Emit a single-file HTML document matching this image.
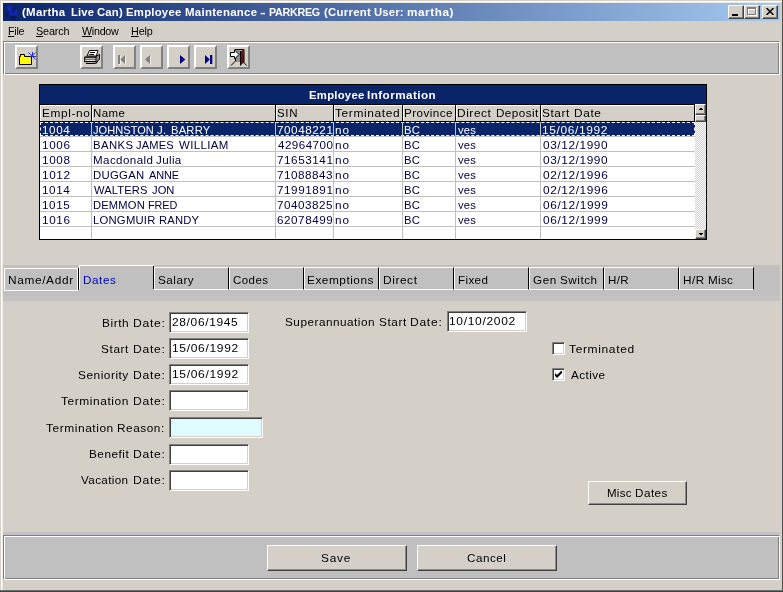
<!DOCTYPE html>
<html><head><meta charset="utf-8"><title>Employee Maintenance</title>
<style>
html,body{margin:0;padding:0}
body{width:783px;height:592px;position:relative;overflow:hidden;background:#d4d0c8;font-family:"Liberation Sans",sans-serif;font-size:11px;}
.a{position:absolute;box-sizing:border-box}
#texts{position:absolute;left:0;top:0;width:783px;height:592px;will-change:transform}
.t{position:absolute;white-space:pre;transform-origin:0 0;display:block}
.t u{text-decoration:underline;text-underline-offset:1px;text-decoration-thickness:1px}
#title{left:3px;top:3px;width:777px;height:18px;background:linear-gradient(90deg,#0a246a 0%,#a6caf0 100%)}
.cb{top:5px;width:16px;height:14px;background:#d4d0c8;border:1px solid;border-color:#fff #404040 #404040 #fff;box-shadow:inset -1px -1px 0 #808080}
.etch{border:1px solid;border-color:#808080 #fff #fff #808080;box-shadow:inset 1px 1px 0 #fff,inset -1px -1px 0 #808080;background:#c0c0c0}
.tbtn{top:45px;width:23px;height:24px;background:#d4d0c8;border:2px solid;border-color:#fff #808080 #808080 #fff}
.btn{background:#d4d0c8;border:1px solid;border-color:#fff #404040 #404040 #fff;box-shadow:inset -1px -1px 0 #8c8a86}
.inp{width:80px;height:21px;background:#fff;border:1px solid;border-color:#808080 #fff #fff #808080;box-shadow:inset 1px 1px 0 #404040,inset -1px -1px 0 #d4d0c8}
.hc{top:105px;height:16px;background:#d4d0c8;border-top:1px solid #fff;border-left:1px solid #fff}
.sb{background:#d4d0c8;border:1px solid;border-color:#fff #404040 #404040 #fff;box-shadow:inset -1px -1px 0 #808080}
.vl{top:122px;width:1px;height:117px;background:#c0c0c0}
.hl{left:40px;width:655px;height:1px;background:#c0c0c0}
.tab{top:267px;width:75px;height:23px;border:1px solid;border-color:#fff #000 #fff #fff}
.chk{width:13px;height:13px;background:#fff;border:1px solid;border-color:#808080 #fff #fff #808080;box-shadow:inset 1px 1px 0 #404040,inset -1px -1px 0 #d4d0c8}
</style></head><body>
<!-- window frame -->
<div class="a" style="left:1px;top:1px;width:781px;height:1px;background:#fff"></div>
<div class="a" style="left:1px;top:1px;width:1px;height:590px;background:#fff"></div>
<div class="a" style="left:2px;top:2px;width:779px;height:1px;background:#eceae6"></div>
<div class="a" style="left:2px;top:2px;width:1px;height:588px;background:#eceae6"></div>
<div class="a" style="left:782px;top:0;width:1px;height:592px;background:#505050"></div>
<div class="a" style="left:0;top:590px;width:783px;height:1px;background:#707070"></div>
<div class="a" style="left:0;top:591px;width:783px;height:1px;background:#404040"></div>
<!-- title bar -->
<div class="a" id="title"></div>
<svg class="a" style="left:4px;top:3px" width="17" height="18" viewBox="0 0 17 18"><defs><filter id="bl" x="-20%" y="-20%" width="140%" height="140%"><feGaussianBlur stdDeviation=".8"/></filter></defs><g filter="url(#bl)"><rect x="3" y="3" width="5" height="4" fill="#1c2cd8" opacity=".75"/><rect x="5" y="7" width="8" height="5" fill="#1c2cd8" opacity=".8"/><rect x="8" y="6" width="2" height="4" fill="#02062a"/><rect x="4" y="8" width="2" height="2" fill="#02062a" opacity=".7"/><rect x="7" y="13" width="5" height="3" fill="#02062a" opacity=".65"/><rect x="2" y="11" width="3" height="3" fill="#02062a" opacity=".4"/></g></svg>
<div class="a cb" style="left:728px"><div class="a" style="left:3px;top:8px;width:6px;height:2px;background:#000"></div></div>
<div class="a cb" style="left:744px"><div class="a" style="left:3px;top:2px;width:9px;height:8px;border:1px solid #fff;border-top-width:2px"></div><div class="a" style="left:2px;top:1px;width:9px;height:8px;border:1px solid #808080;border-top-width:2px"></div></div>
<div class="a cb" style="left:762px"><svg class="a" style="left:3px;top:2px" width="8" height="7" viewBox="0 0 8 7"><path d="M0.500 0l7 7M7.500 0l-7 7" stroke="#000" stroke-width="1.450" fill="none"/></svg></div>
<!-- toolbar -->
<div class="a etch" style="left:3px;top:41px;width:777px;height:34px"></div>
<div class="a tbtn" style="left:15px"></div>
<div class="a tbtn" style="left:80px"></div>
<div class="a tbtn" style="left:113px"></div>
<div class="a tbtn" style="left:140px"></div>
<div class="a tbtn" style="left:167px"></div>
<div class="a tbtn" style="left:194px"></div>
<div class="a tbtn" style="left:227px"></div>
<svg class="a" style="left:0;top:40px" width="260" height="36" viewBox="0 40 260 36">
<path d="M19.500 56.500h1v-2h4v2h7v8h-12z" fill="#ffff00" stroke="#000"/>
<path d="M28.500 52.500l7 7M35.500 52.500l-4.500 5M32.500 52v5M30.500 56.500h5.500" stroke="#2a2acc" fill="none"/>
<path d="M84.500 56.500h11.500v7h-10v-1.500h-1.500z" fill="#eceae4"/>
<path d="M96 56.500l3.500-2.200v4.700l-3.500 4.500z" fill="#8a8a8a" stroke="#000" stroke-width=".9"/>
<path d="M89.500 50.500h8.500l-1.700 5.500h-9.300z" fill="#fff" stroke="#000"/>
<path d="M90 52.500h5M89.300 54.500h4.700" stroke="#000"/>
<path d="M84.500 57.100h11.500" stroke="#000" stroke-width="1.400"/>
<path d="M84.500 59.200h11.500" stroke="#000" stroke-width=".7"/>
<path d="M84.300 61.600h12" stroke="#000" stroke-width="1.300"/>
<path d="M86 63.500h9.500" stroke="#000"/>
<path d="M84.700 57v5" stroke="#000"/>
<path d="M119 56h2v9h-2zM126 56v9l-4.700-4.500z" fill="#fff" opacity=".7"/>
<path d="M118 55h2v9h-2zM125 55v9l-4.700-4.500z" fill="#808080"/>
<path d="M151 56v9l-5-4.500z" fill="#fff" opacity=".7"/>
<path d="M150 55v9l-5-4.500z" fill="#808080"/>
<path d="M180 55v9l5.300-4.500z" fill="#000080"/>
<path d="M205 55v9l4.800-4.500zM210 55h2.300v9H210z" fill="#000080"/>
<path d="M236 50h4.500v12H236z" fill="#8c8c8c"/>
<path d="M240.500 51.500l3.200-2 .3 13-3.500 3z" fill="#6a1212"/>
<path d="M234.500 49.500h9.500v13M240.500 51v14.500" stroke="#000" fill="none"/>
<path d="M230.500 52.500h4v-2.500l4.500 4.500-4.500 4.500v-2.500h-4z" fill="#fff" stroke="#000"/>
<path d="M235.500 58v3l-4.500 4.500M244 62.500l2.500 3" stroke="#000" fill="none"/>
</svg>
<!-- table -->
<div class="a" style="left:39px;top:84px;width:668px;height:156px;background:#fff;border:1px solid #000"></div>
<div class="a" style="left:40px;top:85px;width:666px;height:19px;background:#0a246a"></div>
<div class="a" style="left:40px;top:104px;width:655px;height:18px;background:#000"></div>
<div class="a hc" style="left:40px;width:51px"></div>
<div class="a hc" style="left:92px;width:183px"></div>
<div class="a hc" style="left:276px;width:57px"></div>
<div class="a hc" style="left:334px;width:68px"></div>
<div class="a hc" style="left:403px;width:52px"></div>
<div class="a hc" style="left:456px;width:84px"></div>
<div class="a hc" style="left:541px;width:153px"></div>
<div class="a" style="left:40px;top:122px;width:655px;height:14px;background:#0a246a;border:1px dashed #fff"></div>
<div class="a vl" style="left:91px"></div><div class="a vl" style="left:275px"></div><div class="a vl" style="left:333px"></div><div class="a vl" style="left:402px"></div><div class="a vl" style="left:455px"></div><div class="a vl" style="left:540px"></div>
<div class="a hl" style="top:136px"></div><div class="a hl" style="top:151px"></div><div class="a hl" style="top:166px"></div><div class="a hl" style="top:181px"></div><div class="a hl" style="top:196px"></div><div class="a hl" style="top:211px"></div><div class="a hl" style="top:226px"></div>
<!-- scrollbar -->
<div class="a" style="left:695px;top:104px;width:11px;height:135px;background-color:#eae8e4;background-image:conic-gradient(#fff 25%,#d4d0c8 0 50%,#fff 0 75%,#d4d0c8 0);background-size:2px 2px"></div>
<div class="a sb" style="left:695px;top:104px;width:11px;height:11px"><svg class="a" style="left:3px;top:3px" width="4" height="2" viewBox="0 0 4 2"><path d="M1 0h2v1h1v1H0V1h1z" fill="#000"/></svg></div>
<div class="a sb" style="left:695px;top:115px;width:11px;height:7px"></div>
<div class="a sb" style="left:695px;top:229px;width:11px;height:10px"><svg class="a" style="left:3px;top:3px" width="4" height="2" viewBox="0 0 4 2"><path d="M0 0h4v1H3v1H1V1H0z" fill="#000"/></svg></div>
<!-- tabs -->
<div class="a" style="left:3px;top:265px;width:777px;height:36px;background:#c0c0c0"></div>
<div class="a" style="left:3px;top:296px;width:777px;height:5px;background:#c5c3c1"></div>
<div class="a" style="left:4px;top:268px;width:74px;height:23px;border:1px solid #fff"></div>
<div class="a" style="left:78px;top:268px;width:1px;height:22px;background:#000"></div>
<div class="a" style="left:79px;top:265px;width:75px;height:25px;border-left:1px solid #fff;border-top:1px solid #fff"></div>
<div class="a" style="left:153px;top:266px;width:1px;height:23px;background:#000"></div>
<div class="a tab" style="left:154px"></div><div class="a tab" style="left:229px"></div><div class="a tab" style="left:304px"></div><div class="a tab" style="left:379px"></div><div class="a tab" style="left:454px"></div><div class="a tab" style="left:529px"></div><div class="a tab" style="left:604px"></div><div class="a tab" style="left:679px"></div>
<!-- form -->
<div class="a inp" style="left:169px;top:312px"></div>
<div class="a inp" style="left:169px;top:338px"></div>
<div class="a inp" style="left:169px;top:364px"></div>
<div class="a inp" style="left:169px;top:390px"></div>
<div class="a inp" style="left:169px;top:417px;width:94px;height:21px;background:#e0fbff"></div>
<div class="a inp" style="left:169px;top:444px"></div>
<div class="a inp" style="left:169px;top:470px"></div>
<div class="a inp" style="left:447px;top:311px;width:80px"></div>
<div class="a chk" style="left:552px;top:342px"></div>
<div class="a chk" style="left:552px;top:368px"><svg class="a" style="left:2px;top:2px" width="7" height="7" viewBox="0 0 7 7"><path d="M0 2v3l2 2 5-5V-1L2 4z" fill="#000"/></svg></div>
<div class="a btn" style="left:588px;top:481px;width:99px;height:24px"></div>
<!-- bottom -->
<div class="a" style="left:3px;top:532px;width:777px;height:4px;background:#c4c2c6"></div>
<div class="a etch" style="left:3px;top:535px;width:777px;height:45px"></div>
<div class="a btn" style="left:267px;top:545px;width:140px;height:26px"></div>
<div class="a btn" style="left:417px;top:545px;width:140px;height:26px"></div>
<div id="texts">
<span class="t" style="left:22.30px;top:5px;font-size:11px;line-height:14px;height:14px;color:#fff;letter-spacing:0.292px;transform:scaleX(1.0407);font-weight:bold;">(Martha</span>
<span class="t" style="left:70.53px;top:5px;font-size:11px;line-height:14px;height:14px;color:#fff;letter-spacing:0.197px;transform:scaleX(1.0200);font-weight:bold;">Live</span>
<span class="t" style="left:97.39px;top:5px;font-size:11px;line-height:14px;height:14px;color:#fff;letter-spacing:0.208px;transform:scaleX(1.0248);font-weight:bold;">Can)</span>
<span class="t" style="left:126.02px;top:5px;font-size:11px;line-height:14px;height:14px;color:#fff;letter-spacing:0.246px;transform:scaleX(1.0296);font-weight:bold;">Employee</span>
<span class="t" style="left:184.71px;top:5px;font-size:11px;line-height:14px;height:14px;color:#fff;letter-spacing:0.278px;transform:scaleX(1.0381);font-weight:bold;">Maintenance</span>
<span class="t" style="left:260.38px;top:5px;font-size:11px;line-height:14px;height:14px;color:#fff;letter-spacing:0.000px;transform:scaleX(1.5798);font-weight:bold;">-</span>
<span class="t" style="left:269.16px;top:5px;font-size:11px;line-height:14px;height:14px;color:#fff;letter-spacing:-0.284px;transform:scaleX(0.9736);font-weight:bold;">PARKREG</span>
<span class="t" style="left:323.61px;top:5px;font-size:11px;line-height:14px;height:14px;color:#fff;letter-spacing:0.261px;transform:scaleX(1.0376);font-weight:bold;">(Current</span>
<span class="t" style="left:374.01px;top:5px;font-size:11px;line-height:14px;height:14px;color:#fff;letter-spacing:0.153px;transform:scaleX(1.0300);font-weight:bold;">User:</span>
<span class="t" style="left:406.96px;top:5px;font-size:11px;line-height:14px;height:14px;color:#fff;letter-spacing:0.536px;transform:scaleX(1.0661);font-weight:bold;">martha)</span>
<span class="t" style="left:8.00px;top:24px;font-size:11px;line-height:14px;height:14px;color:#000;letter-spacing:-0.262px;transform:scaleX(0.9719);"><u>F</u>ile</span>
<span class="t" style="left:36.25px;top:24px;font-size:11px;line-height:14px;height:14px;color:#000;letter-spacing:-0.173px;transform:scaleX(0.9821);"><u>S</u>earch</span>
<span class="t" style="left:82.10px;top:24px;font-size:11px;line-height:14px;height:14px;color:#000;letter-spacing:-0.279px;transform:scaleX(0.9746);"><u>W</u>indow</span>
<span class="t" style="left:131.00px;top:24px;font-size:11px;line-height:14px;height:14px;color:#000;letter-spacing:-0.168px;transform:scaleX(0.9807);"><u>H</u>elp</span>
<span class="t" style="left:309.12px;top:88px;font-size:11px;line-height:14px;height:14px;color:#fff;letter-spacing:0.246px;transform:scaleX(1.0296);font-weight:bold;">Employee</span>
<span class="t" style="left:367.18px;top:88px;font-size:11px;line-height:14px;height:14px;color:#fff;letter-spacing:0.420px;transform:scaleX(1.0607);font-weight:bold;">Information</span>
<span class="t" style="left:41.60px;top:106px;font-size:11px;line-height:14px;height:14px;color:#000;letter-spacing:0.567px;transform:scaleX(1.0795);">Empl-no</span>
<span class="t" style="left:93.20px;top:106px;font-size:11px;line-height:14px;height:14px;color:#000;letter-spacing:0.451px;transform:scaleX(1.0418);">Name</span>
<span class="t" style="left:277.20px;top:106px;font-size:11px;line-height:14px;height:14px;color:#000;letter-spacing:0.609px;transform:scaleX(1.0451);">SIN</span>
<span class="t" style="left:335.38px;top:106px;font-size:11px;line-height:14px;height:14px;color:#000;letter-spacing:0.573px;transform:scaleX(1.0867);">Terminated</span>
<span class="t" style="left:403.90px;top:106px;font-size:11px;line-height:14px;height:14px;color:#000;letter-spacing:0.413px;transform:scaleX(1.0606);">Province</span>
<span class="t" style="left:457.00px;top:106px;font-size:11px;line-height:14px;height:14px;color:#000;letter-spacing:0.510px;transform:scaleX(1.0833);">Direct</span>
<span class="t" style="left:495.50px;top:106px;font-size:11px;line-height:14px;height:14px;color:#000;letter-spacing:0.410px;transform:scaleX(1.0620);">Deposit</span>
<span class="t" style="left:541.90px;top:106px;font-size:11px;line-height:14px;height:14px;color:#000;letter-spacing:0.536px;transform:scaleX(1.0776);">Start</span>
<span class="t" style="left:573.80px;top:106px;font-size:11px;line-height:14px;height:14px;color:#000;letter-spacing:0.601px;transform:scaleX(1.0741);">Date</span>
<span class="t" style="left:41.73px;top:123px;font-size:11px;line-height:14px;height:14px;color:#fff;letter-spacing:0.521px;transform:scaleX(1.0658);height:11px;overflow:hidden;">1004</span>
<span class="t" style="left:93.02px;top:123px;font-size:11px;line-height:14px;height:14px;color:#fff;letter-spacing:0.039px;transform:scaleX(1.0046);height:11px;overflow:hidden;">JOHNSTON</span>
<span class="t" style="left:156.70px;top:123px;font-size:11px;line-height:14px;height:14px;color:#fff;letter-spacing:0.275px;transform:scaleX(1.0365);height:11px;overflow:hidden;">J.</span>
<span class="t" style="left:171.40px;top:123px;font-size:11px;line-height:14px;height:14px;color:#fff;letter-spacing:0.169px;transform:scaleX(1.0225);height:11px;overflow:hidden;">BARRY</span>
<span class="t" style="left:277.07px;top:123px;font-size:11px;line-height:14px;height:14px;color:#fff;letter-spacing:0.513px;transform:scaleX(1.0638);height:11px;overflow:hidden;">70048221</span>
<span class="t" style="left:334.55px;top:123px;font-size:11px;line-height:14px;height:14px;color:#fff;letter-spacing:0.792px;transform:scaleX(1.0674);height:11px;overflow:hidden;">no</span>
<span class="t" style="left:403.90px;top:123px;font-size:11px;line-height:14px;height:14px;color:#fff;letter-spacing:0.286px;transform:scaleX(1.0294);height:11px;overflow:hidden;">BC</span>
<span class="t" style="left:458.34px;top:123px;font-size:11px;line-height:14px;height:14px;color:#fff;letter-spacing:0.157px;transform:scaleX(1.0210);height:11px;overflow:hidden;">yes</span>
<span class="t" style="left:542.33px;top:123px;font-size:11px;line-height:14px;height:14px;color:#fff;letter-spacing:0.575px;transform:scaleX(1.0877);height:11px;overflow:hidden;">15/06/1992</span>
<span class="t" style="left:41.73px;top:138px;font-size:11px;line-height:14px;height:14px;color:#000040;letter-spacing:0.579px;transform:scaleX(1.0658);height:11px;overflow:hidden;">1006</span>
<span class="t" style="left:92.70px;top:138px;font-size:11px;line-height:14px;height:14px;color:#000040;letter-spacing:0.400px;transform:scaleX(1.0315);height:11px;overflow:hidden;">BANKS</span>
<span class="t" style="left:136.02px;top:138px;font-size:11px;line-height:14px;height:14px;color:#000040;letter-spacing:0.118px;transform:scaleX(1.0123);height:11px;overflow:hidden;">JAMES</span>
<span class="t" style="left:178.90px;top:138px;font-size:11px;line-height:14px;height:14px;color:#000040;letter-spacing:0.336px;transform:scaleX(1.0413);height:11px;overflow:hidden;">WILLIAM</span>
<span class="t" style="left:277.59px;top:138px;font-size:11px;line-height:14px;height:14px;color:#000040;letter-spacing:0.429px;transform:scaleX(1.0568);height:11px;overflow:hidden;">42964700</span>
<span class="t" style="left:334.55px;top:138px;font-size:11px;line-height:14px;height:14px;color:#000040;letter-spacing:0.792px;transform:scaleX(1.0674);height:11px;overflow:hidden;">no</span>
<span class="t" style="left:403.90px;top:138px;font-size:11px;line-height:14px;height:14px;color:#000040;letter-spacing:0.286px;transform:scaleX(1.0294);height:11px;overflow:hidden;">BC</span>
<span class="t" style="left:458.34px;top:138px;font-size:11px;line-height:14px;height:14px;color:#000040;letter-spacing:0.157px;transform:scaleX(1.0210);height:11px;overflow:hidden;">yes</span>
<span class="t" style="left:543.01px;top:138px;font-size:11px;line-height:14px;height:14px;color:#000040;letter-spacing:0.540px;transform:scaleX(1.0782);height:11px;overflow:hidden;">03/12/1990</span>
<span class="t" style="left:41.73px;top:153px;font-size:11px;line-height:14px;height:14px;color:#000040;letter-spacing:0.574px;transform:scaleX(1.0658);height:11px;overflow:hidden;">1008</span>
<span class="t" style="left:92.70px;top:153px;font-size:11px;line-height:14px;height:14px;color:#000040;letter-spacing:0.392px;transform:scaleX(1.0519);height:11px;overflow:hidden;">Macdonald</span>
<span class="t" style="left:156.00px;top:153px;font-size:11px;line-height:14px;height:14px;color:#000040;letter-spacing:0.341px;transform:scaleX(1.0529);height:11px;overflow:hidden;">Julia</span>
<span class="t" style="left:277.07px;top:153px;font-size:11px;line-height:14px;height:14px;color:#000040;letter-spacing:0.513px;transform:scaleX(1.0638);height:11px;overflow:hidden;">71653141</span>
<span class="t" style="left:334.55px;top:153px;font-size:11px;line-height:14px;height:14px;color:#000040;letter-spacing:0.792px;transform:scaleX(1.0674);height:11px;overflow:hidden;">no</span>
<span class="t" style="left:403.90px;top:153px;font-size:11px;line-height:14px;height:14px;color:#000040;letter-spacing:0.286px;transform:scaleX(1.0294);height:11px;overflow:hidden;">BC</span>
<span class="t" style="left:458.34px;top:153px;font-size:11px;line-height:14px;height:14px;color:#000040;letter-spacing:0.157px;transform:scaleX(1.0210);height:11px;overflow:hidden;">yes</span>
<span class="t" style="left:543.01px;top:153px;font-size:11px;line-height:14px;height:14px;color:#000040;letter-spacing:0.540px;transform:scaleX(1.0782);height:11px;overflow:hidden;">03/12/1990</span>
<span class="t" style="left:41.73px;top:168px;font-size:11px;line-height:14px;height:14px;color:#000040;letter-spacing:0.547px;transform:scaleX(1.0702);height:11px;overflow:hidden;">1012</span>
<span class="t" style="left:92.70px;top:168px;font-size:11px;line-height:14px;height:14px;color:#000040;letter-spacing:0.311px;transform:scaleX(1.0294);height:11px;overflow:hidden;">DUGGAN</span>
<span class="t" style="left:148.88px;top:168px;font-size:11px;line-height:14px;height:14px;color:#000040;letter-spacing:-0.092px;transform:scaleX(0.9938);height:11px;overflow:hidden;">ANNE</span>
<span class="t" style="left:277.07px;top:168px;font-size:11px;line-height:14px;height:14px;color:#000040;letter-spacing:0.477px;transform:scaleX(1.0626);height:11px;overflow:hidden;">71088843</span>
<span class="t" style="left:334.55px;top:168px;font-size:11px;line-height:14px;height:14px;color:#000040;letter-spacing:0.792px;transform:scaleX(1.0674);height:11px;overflow:hidden;">no</span>
<span class="t" style="left:403.90px;top:168px;font-size:11px;line-height:14px;height:14px;color:#000040;letter-spacing:0.286px;transform:scaleX(1.0294);height:11px;overflow:hidden;">BC</span>
<span class="t" style="left:458.34px;top:168px;font-size:11px;line-height:14px;height:14px;color:#000040;letter-spacing:0.157px;transform:scaleX(1.0210);height:11px;overflow:hidden;">yes</span>
<span class="t" style="left:543.01px;top:168px;font-size:11px;line-height:14px;height:14px;color:#000040;letter-spacing:0.553px;transform:scaleX(1.0787);height:11px;overflow:hidden;">02/12/1996</span>
<span class="t" style="left:41.73px;top:183px;font-size:11px;line-height:14px;height:14px;color:#000040;letter-spacing:0.521px;transform:scaleX(1.0658);height:11px;overflow:hidden;">1014</span>
<span class="t" style="left:94.10px;top:183px;font-size:11px;line-height:14px;height:14px;color:#000040;letter-spacing:0.125px;transform:scaleX(1.0134);height:11px;overflow:hidden;">WALTERS</span>
<span class="t" style="left:151.72px;top:183px;font-size:11px;line-height:14px;height:14px;color:#000040;letter-spacing:0.051px;transform:scaleX(1.0148);height:11px;overflow:hidden;">JON</span>
<span class="t" style="left:277.07px;top:183px;font-size:11px;line-height:14px;height:14px;color:#000040;letter-spacing:0.513px;transform:scaleX(1.0638);height:11px;overflow:hidden;">71991891</span>
<span class="t" style="left:334.55px;top:183px;font-size:11px;line-height:14px;height:14px;color:#000040;letter-spacing:0.792px;transform:scaleX(1.0674);height:11px;overflow:hidden;">no</span>
<span class="t" style="left:403.90px;top:183px;font-size:11px;line-height:14px;height:14px;color:#000040;letter-spacing:0.286px;transform:scaleX(1.0294);height:11px;overflow:hidden;">BC</span>
<span class="t" style="left:458.34px;top:183px;font-size:11px;line-height:14px;height:14px;color:#000040;letter-spacing:0.157px;transform:scaleX(1.0210);height:11px;overflow:hidden;">yes</span>
<span class="t" style="left:543.01px;top:183px;font-size:11px;line-height:14px;height:14px;color:#000040;letter-spacing:0.553px;transform:scaleX(1.0787);height:11px;overflow:hidden;">02/12/1996</span>
<span class="t" style="left:41.73px;top:198px;font-size:11px;line-height:14px;height:14px;color:#000040;letter-spacing:0.565px;transform:scaleX(1.0658);height:11px;overflow:hidden;">1015</span>
<span class="t" style="left:92.70px;top:198px;font-size:11px;line-height:14px;height:14px;color:#000040;letter-spacing:0.176px;transform:scaleX(1.0151);height:11px;overflow:hidden;">DEMMON</span>
<span class="t" style="left:148.30px;top:198px;font-size:11px;line-height:14px;height:14px;color:#000040;letter-spacing:-0.101px;transform:scaleX(0.9894);height:11px;overflow:hidden;">FRED</span>
<span class="t" style="left:277.07px;top:198px;font-size:11px;line-height:14px;height:14px;color:#000040;letter-spacing:0.472px;transform:scaleX(1.0623);height:11px;overflow:hidden;">70403825</span>
<span class="t" style="left:334.55px;top:198px;font-size:11px;line-height:14px;height:14px;color:#000040;letter-spacing:0.792px;transform:scaleX(1.0674);height:11px;overflow:hidden;">no</span>
<span class="t" style="left:403.90px;top:198px;font-size:11px;line-height:14px;height:14px;color:#000040;letter-spacing:0.286px;transform:scaleX(1.0294);height:11px;overflow:hidden;">BC</span>
<span class="t" style="left:458.34px;top:198px;font-size:11px;line-height:14px;height:14px;color:#000040;letter-spacing:0.157px;transform:scaleX(1.0210);height:11px;overflow:hidden;">yes</span>
<span class="t" style="left:543.01px;top:198px;font-size:11px;line-height:14px;height:14px;color:#000040;letter-spacing:0.568px;transform:scaleX(1.0792);height:11px;overflow:hidden;">06/12/1999</span>
<span class="t" style="left:41.73px;top:213px;font-size:11px;line-height:14px;height:14px;color:#000040;letter-spacing:0.579px;transform:scaleX(1.0658);height:11px;overflow:hidden;">1016</span>
<span class="t" style="left:92.70px;top:213px;font-size:11px;line-height:14px;height:14px;color:#000040;letter-spacing:0.221px;transform:scaleX(1.0255);height:11px;overflow:hidden;">LONGMUIR</span>
<span class="t" style="left:159.00px;top:213px;font-size:11px;line-height:14px;height:14px;color:#000040;letter-spacing:0.200px;transform:scaleX(1.0195);height:11px;overflow:hidden;">RANDY</span>
<span class="t" style="left:277.16px;top:213px;font-size:11px;line-height:14px;height:14px;color:#000040;letter-spacing:0.505px;transform:scaleX(1.0621);height:11px;overflow:hidden;">62078499</span>
<span class="t" style="left:334.55px;top:213px;font-size:11px;line-height:14px;height:14px;color:#000040;letter-spacing:0.792px;transform:scaleX(1.0674);height:11px;overflow:hidden;">no</span>
<span class="t" style="left:403.90px;top:213px;font-size:11px;line-height:14px;height:14px;color:#000040;letter-spacing:0.286px;transform:scaleX(1.0294);height:11px;overflow:hidden;">BC</span>
<span class="t" style="left:458.34px;top:213px;font-size:11px;line-height:14px;height:14px;color:#000040;letter-spacing:0.157px;transform:scaleX(1.0210);height:11px;overflow:hidden;">yes</span>
<span class="t" style="left:543.01px;top:213px;font-size:11px;line-height:14px;height:14px;color:#000040;letter-spacing:0.568px;transform:scaleX(1.0792);height:11px;overflow:hidden;">06/12/1999</span>
<span class="t" style="left:7.90px;top:273px;font-size:11px;line-height:14px;height:14px;color:#000;letter-spacing:0.592px;transform:scaleX(1.0780);">Name/Addr</span>
<span class="t" style="left:82.80px;top:273px;font-size:11px;line-height:14px;height:14px;color:#0000c0;letter-spacing:0.531px;transform:scaleX(1.0631);">Dates</span>
<span class="t" style="left:157.90px;top:273px;font-size:11px;line-height:14px;height:14px;color:#000;letter-spacing:0.460px;transform:scaleX(1.0637);">Salary</span>
<span class="t" style="left:233.37px;top:273px;font-size:11px;line-height:14px;height:14px;color:#000;letter-spacing:0.409px;transform:scaleX(1.0459);">Codes</span>
<span class="t" style="left:307.00px;top:273px;font-size:11px;line-height:14px;height:14px;color:#000;letter-spacing:0.497px;transform:scaleX(1.0731);">Exemptions</span>
<span class="t" style="left:382.90px;top:273px;font-size:11px;line-height:14px;height:14px;color:#000;letter-spacing:0.530px;transform:scaleX(1.0817);">Direct</span>
<span class="t" style="left:457.90px;top:273px;font-size:11px;line-height:14px;height:14px;color:#000;letter-spacing:0.348px;transform:scaleX(1.0558);">Fixed</span>
<span class="t" style="left:533.08px;top:273px;font-size:11px;line-height:14px;height:14px;color:#000;letter-spacing:0.565px;transform:scaleX(1.0574);">Gen</span>
<span class="t" style="left:559.90px;top:273px;font-size:11px;line-height:14px;height:14px;color:#000;letter-spacing:0.496px;transform:scaleX(1.0618);">Switch</span>
<span class="t" style="left:607.70px;top:273px;font-size:11px;line-height:14px;height:14px;color:#000;letter-spacing:0.355px;transform:scaleX(1.0503);">H/R</span>
<span class="t" style="left:682.60px;top:273px;font-size:11px;line-height:14px;height:14px;color:#000;letter-spacing:0.517px;transform:scaleX(1.0635);">H/R</span>
<span class="t" style="left:707.60px;top:273px;font-size:11px;line-height:14px;height:14px;color:#000;letter-spacing:0.307px;transform:scaleX(1.0573);">Misc</span>
<span class="t" style="left:101.80px;top:316px;font-size:11px;line-height:14px;height:14px;color:#000;letter-spacing:0.481px;transform:scaleX(1.0836);">Birth</span>
<span class="t" style="left:132.80px;top:316px;font-size:11px;line-height:14px;height:14px;color:#000;letter-spacing:0.656px;transform:scaleX(1.1002);">Date:</span>
<span class="t" style="left:100.80px;top:342px;font-size:11px;line-height:14px;height:14px;color:#000;letter-spacing:0.557px;transform:scaleX(1.0756);">Start</span>
<span class="t" style="left:132.80px;top:342px;font-size:11px;line-height:14px;height:14px;color:#000;letter-spacing:0.656px;transform:scaleX(1.1002);">Date:</span>
<span class="t" style="left:77.50px;top:368px;font-size:11px;line-height:14px;height:14px;color:#000;letter-spacing:0.477px;transform:scaleX(1.0785);">Seniority</span>
<span class="t" style="left:132.80px;top:368px;font-size:11px;line-height:14px;height:14px;color:#000;letter-spacing:0.656px;transform:scaleX(1.1002);">Date:</span>
<span class="t" style="left:61.28px;top:394px;font-size:11px;line-height:14px;height:14px;color:#000;letter-spacing:0.532px;transform:scaleX(1.0840);">Termination</span>
<span class="t" style="left:132.80px;top:394px;font-size:11px;line-height:14px;height:14px;color:#000;letter-spacing:0.656px;transform:scaleX(1.1002);">Date:</span>
<span class="t" style="left:45.98px;top:421px;font-size:11px;line-height:14px;height:14px;color:#000;letter-spacing:0.506px;transform:scaleX(1.0864);">Termination</span>
<span class="t" style="left:117.40px;top:421px;font-size:11px;line-height:14px;height:14px;color:#000;letter-spacing:0.509px;transform:scaleX(1.0715);">Reason:</span>
<span class="t" style="left:88.50px;top:447px;font-size:11px;line-height:14px;height:14px;color:#000;letter-spacing:0.461px;transform:scaleX(1.0717);">Benefit</span>
<span class="t" style="left:132.80px;top:447px;font-size:11px;line-height:14px;height:14px;color:#000;letter-spacing:0.656px;transform:scaleX(1.1002);">Date:</span>
<span class="t" style="left:81.13px;top:473px;font-size:11px;line-height:14px;height:14px;color:#000;letter-spacing:0.343px;transform:scaleX(1.0611);">Vacation</span>
<span class="t" style="left:132.80px;top:473px;font-size:11px;line-height:14px;height:14px;color:#000;letter-spacing:0.656px;transform:scaleX(1.1002);">Date:</span>
<span class="t" style="left:284.90px;top:315px;font-size:11px;line-height:14px;height:14px;color:#000;letter-spacing:0.470px;transform:scaleX(1.0690);">Superannuation</span>
<span class="t" style="left:378.90px;top:315px;font-size:11px;line-height:14px;height:14px;color:#000;letter-spacing:0.550px;transform:scaleX(1.0716);">Start</span>
<span class="t" style="left:410.40px;top:315px;font-size:11px;line-height:14px;height:14px;color:#000;letter-spacing:0.651px;transform:scaleX(1.0983);">Date:</span>
<span class="t" style="left:172.19px;top:315px;font-size:11px;line-height:14px;height:14px;color:#000;letter-spacing:0.606px;transform:scaleX(1.0861);">28/06/1945</span>
<span class="t" style="left:171.63px;top:341px;font-size:11px;line-height:14px;height:14px;color:#000;letter-spacing:0.612px;transform:scaleX(1.0945);">15/06/1992</span>
<span class="t" style="left:171.63px;top:367px;font-size:11px;line-height:14px;height:14px;color:#000;letter-spacing:0.612px;transform:scaleX(1.0945);">15/06/1992</span>
<span class="t" style="left:449.24px;top:314px;font-size:11px;line-height:14px;height:14px;color:#000;letter-spacing:0.623px;transform:scaleX(1.0928);">10/10/2002</span>
<span class="t" style="left:568.88px;top:342px;font-size:11px;line-height:14px;height:14px;color:#000;letter-spacing:0.591px;transform:scaleX(1.0901);">Terminated</span>
<span class="t" style="left:570.57px;top:368px;font-size:11px;line-height:14px;height:14px;color:#000;letter-spacing:0.416px;transform:scaleX(1.0612);">Active</span>
<span class="t" style="left:606.70px;top:486px;font-size:11px;line-height:14px;height:14px;color:#000;letter-spacing:0.286px;transform:scaleX(1.0444);">Misc</span>
<span class="t" style="left:635.30px;top:486px;font-size:11px;line-height:14px;height:14px;color:#000;letter-spacing:0.452px;transform:scaleX(1.0614);">Dates</span>
<span class="t" style="left:321.30px;top:551px;font-size:11px;line-height:14px;height:14px;color:#000;letter-spacing:0.751px;transform:scaleX(1.0762);">Save</span>
<span class="t" style="left:466.95px;top:551px;font-size:11px;line-height:14px;height:14px;color:#000;letter-spacing:0.486px;transform:scaleX(1.0604);">Cancel</span>
</div>
</body></html>
